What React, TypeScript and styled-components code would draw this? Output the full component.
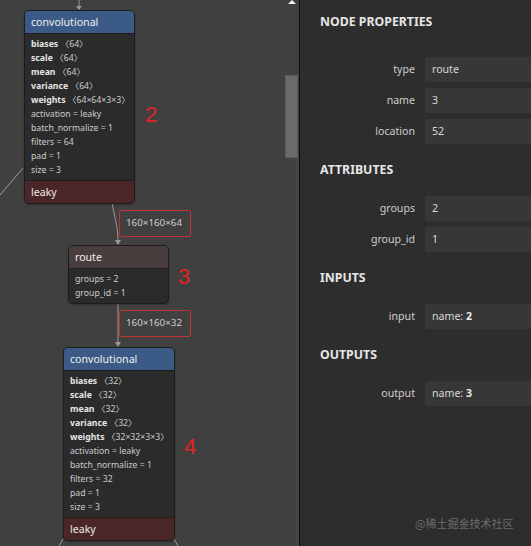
import React from "react";
import styled, { createGlobalStyle } from "styled-components";

const GlobalStyle = createGlobalStyle`
  html, body {
    margin: 0;
    padding: 0;
    background: #2d2d2d;
  }
  body {
    font-family: "Noto Sans", "Liberation Sans", "Noto Sans CJK SC", sans-serif;
  }
`;

const Page = styled.div`
  width: 531px;
  height: 546px;
  display: flex;
  overflow: hidden;
`;

const Canvas = styled.div`
  position: relative;
  width: 299px;
  height: 546px;
  flex-shrink: 0;
  background: #404040;
  overflow: hidden;
`;

const Edges = styled.svg`
  position: absolute;
  left: 0;
  top: 0;
  width: 299px;
  height: 546px;
`;

const Node = styled.div<{ $x: number; $y: number; $w: number }>`
  position: absolute;
  left: ${(p) => p.$x}px;
  top: ${(p) => p.$y}px;
  width: ${(p) => p.$w}px;
  box-sizing: border-box;
  border: 1px solid #1c1c1c;
  border-radius: 5px;
  overflow: hidden;
  background: #2b2b2b;
  box-shadow: 0 1px 2px rgba(0, 0, 0, 0.25);
`;

const NodeHeader = styled.div<{ $kind: "layer" | "route" }>`
  height: 22px;
  line-height: 22px;
  padding: 0 6px;
  font-size: 10.6px;
  color: #f0f0f0;
  background: ${(p) => (p.$kind === "layer" ? "#3c5a86" : "#4a3d3d")};
  border-bottom: 1px solid #1e1e1e;
`;

const NodeBody = styled.div`
  padding: 3px 6px;
`;

const Attr = styled.div`
  height: 14px;
  line-height: 14px;
  font-size: 8.7px;
  color: #cdcdcd;
  white-space: nowrap;

  b {
    color: #e6e6e6;
    font-weight: 700;
  }
`;

const NodeFooter = styled.div`
  height: 22px;
  line-height: 22px;
  padding: 0 6px;
  font-size: 10.6px;
  color: #eaeaea;
  background: #4b2626;
  border-top: 1px solid #1e1e1e;
`;

const EdgeLabel = styled.div<{ $x: number; $y: number }>`
  position: absolute;
  left: ${(p) => p.$x}px;
  top: ${(p) => p.$y}px;
  width: 72px;
  height: 27px;
  box-sizing: border-box;
  border: 1.5px solid #c03434;
  border-radius: 2px;
  padding-left: 6px;
  line-height: 24px;
  font-size: 9.8px;
  color: #cfcfcf;
`;

const Marker = styled.div<{ $x: number; $y: number }>`
  position: absolute;
  left: ${(p) => p.$x}px;
  top: ${(p) => p.$y}px;
  font-family: "Liberation Sans", sans-serif;
  font-size: 22px;
  line-height: 22px;
  color: #e02424;
`;

const ScrollThumb = styled.div`
  position: absolute;
  left: 285px;
  top: 75px;
  width: 13px;
  height: 83px;
  box-sizing: border-box;
  background: #6a6a6a;
  border: 1px solid #5c5c5c;
`;

const ScrollTrack = styled.div`
  position: absolute;
  left: 296px;
  top: 158px;
  width: 3px;
  bottom: 0;
  background: #474747;
`;

const ScrollArrow = styled.div`
  position: absolute;
  left: 288px;
  top: 0;
  width: 0;
  height: 0;
  border-left: 4px solid transparent;
  border-right: 4px solid transparent;
  border-bottom: 4px solid #f2f2f2;
`;

const Panel = styled.div`
  position: relative;
  flex: 1;
  min-width: 0;
  border-left: 1px solid #0e0e0e;
  background: #2d2d2d;
  padding: 14px 0 0 20px;
  display: flex;
  flex-direction: column;
`;

const SectionTitle = styled.div<{ $first?: boolean }>`
  height: 16px;
  line-height: 16px;
  font-size: 12.3px;
  font-weight: 700;
  color: #e6e6e6;
  margin: ${(p) => (p.$first ? "0 0 27px" : "18px 0 18px")};
`;

const PropGrid = styled.div`
  display: grid;
  grid-template-columns: 95px 1fr;
  column-gap: 10px;
  row-gap: 6px;
`;

const PropLabel = styled.div`
  height: 25px;
  line-height: 25px;
  text-align: right;
  font-size: 10.6px;
  color: #cdcdcd;
`;

const PropValue = styled.div`
  height: 25px;
  line-height: 25px;
  padding-left: 7px;
  background: #373737;
  border-radius: 2px 0 0 2px;
  font-size: 10.6px;
  color: #d8d8d8;
  white-space: nowrap;

  b {
    font-weight: 700;
    color: #e8e8e8;
  }
`;

const Watermark = styled.div`
  position: absolute;
  left: 115px;
  top: 515px;
  font-family: "Noto Sans CJK SC", sans-serif;
  font-size: 11px;
  line-height: 16px;
  color: #6c6c6c;
  white-space: nowrap;
`;

type AttrLine = { key: string; value: string; bold?: boolean };

const convAttrs = (n: string, w: string): AttrLine[] => [
  { key: "biases", value: `〈${n}〉`, bold: true },
  { key: "scale", value: `〈${n}〉`, bold: true },
  { key: "mean", value: `〈${n}〉`, bold: true },
  { key: "variance", value: `〈${n}〉`, bold: true },
  { key: "weights", value: `〈${w}〉`, bold: true },
  { key: "activation", value: "= leaky" },
  { key: "batch_normalize", value: "= 1" },
  { key: "filters", value: `= ${n}` },
  { key: "pad", value: "= 1" },
  { key: "size", value: "= 3" },
];

function Attrs({ lines }: { lines: AttrLine[] }) {
  return (
    <NodeBody>
      {lines.map((l) => (
        <Attr key={l.key}>
          {l.bold ? <b>{l.key}</b> : l.key} {l.value}
        </Attr>
      ))}
    </NodeBody>
  );
}

const nodeProps = [
  { label: "type", value: "route" },
  { label: "name", value: "3" },
  { label: "location", value: "52" },
];

const attributes = [
  { label: "groups", value: "2" },
  { label: "group_id", value: "1" },
];

export default function App() {
  return (
    <>
      <GlobalStyle />
      <Page>
        <Canvas>
          <Edges viewBox="0 0 299 546">
            <g stroke="#9a9a9a" strokeWidth="1" fill="none">
              <line x1="79" y1="0" x2="79" y2="7" />
              <line x1="0" y1="195" x2="23" y2="168" />
              <path d="M112 202 C114 216 118 226 118 241" />
              <line x1="118" y1="302" x2="118" y2="343" />
              <line x1="63" y1="539" x2="59" y2="546" />
              <line x1="174" y1="539" x2="178" y2="546" />
            </g>
            <g fill="#9a9a9a">
              <polygon points="76,6 82,6 79,10" />
              <polygon points="115,240 121,240 118,245" />
              <polygon points="115,342 121,342 118,347" />
            </g>
          </Edges>

          <Node $x={24} $y={10} $w={111}>
            <NodeHeader $kind="layer">convolutional</NodeHeader>
            <Attrs lines={convAttrs("64", "64×64×3×3")} />
            <NodeFooter>leaky</NodeFooter>
          </Node>
          <Marker $x={145} $y={104}>2</Marker>

          <EdgeLabel $x={119} $y={210}>160×160×64</EdgeLabel>

          <Node $x={68} $y={245} $w={101}>
            <NodeHeader $kind="route">route</NodeHeader>
            <Attrs
              lines={[
                { key: "groups", value: "= 2" },
                { key: "group_id", value: "= 1" },
              ]}
            />
          </Node>
          <Marker $x={178} $y={266}>3</Marker>

          <EdgeLabel $x={119} $y={310}>160×160×32</EdgeLabel>

          <Node $x={63} $y={347} $w={112}>
            <NodeHeader $kind="layer">convolutional</NodeHeader>
            <Attrs lines={convAttrs("32", "32×32×3×3")} />
            <NodeFooter>leaky</NodeFooter>
          </Node>
          <Marker $x={184} $y={436}>4</Marker>

          <ScrollArrow />
          <ScrollTrack />
          <ScrollThumb />
        </Canvas>

        <Panel>
          <SectionTitle $first>NODE PROPERTIES</SectionTitle>
          <PropGrid>
            {nodeProps.map((p) => (
              <React.Fragment key={p.label}>
                <PropLabel>{p.label}</PropLabel>
                <PropValue>{p.value}</PropValue>
              </React.Fragment>
            ))}
          </PropGrid>

          <SectionTitle>ATTRIBUTES</SectionTitle>
          <PropGrid>
            {attributes.map((p) => (
              <React.Fragment key={p.label}>
                <PropLabel>{p.label}</PropLabel>
                <PropValue>{p.value}</PropValue>
              </React.Fragment>
            ))}
          </PropGrid>

          <SectionTitle>INPUTS</SectionTitle>
          <PropGrid>
            <PropLabel>input</PropLabel>
            <PropValue>
              name: <b>2</b>
            </PropValue>
          </PropGrid>

          <SectionTitle>OUTPUTS</SectionTitle>
          <PropGrid>
            <PropLabel>output</PropLabel>
            <PropValue>
              name: <b>3</b>
            </PropValue>
          </PropGrid>

          <Watermark>@稀土掘金技术社区</Watermark>
        </Panel>
      </Page>
    </>
  );
}
